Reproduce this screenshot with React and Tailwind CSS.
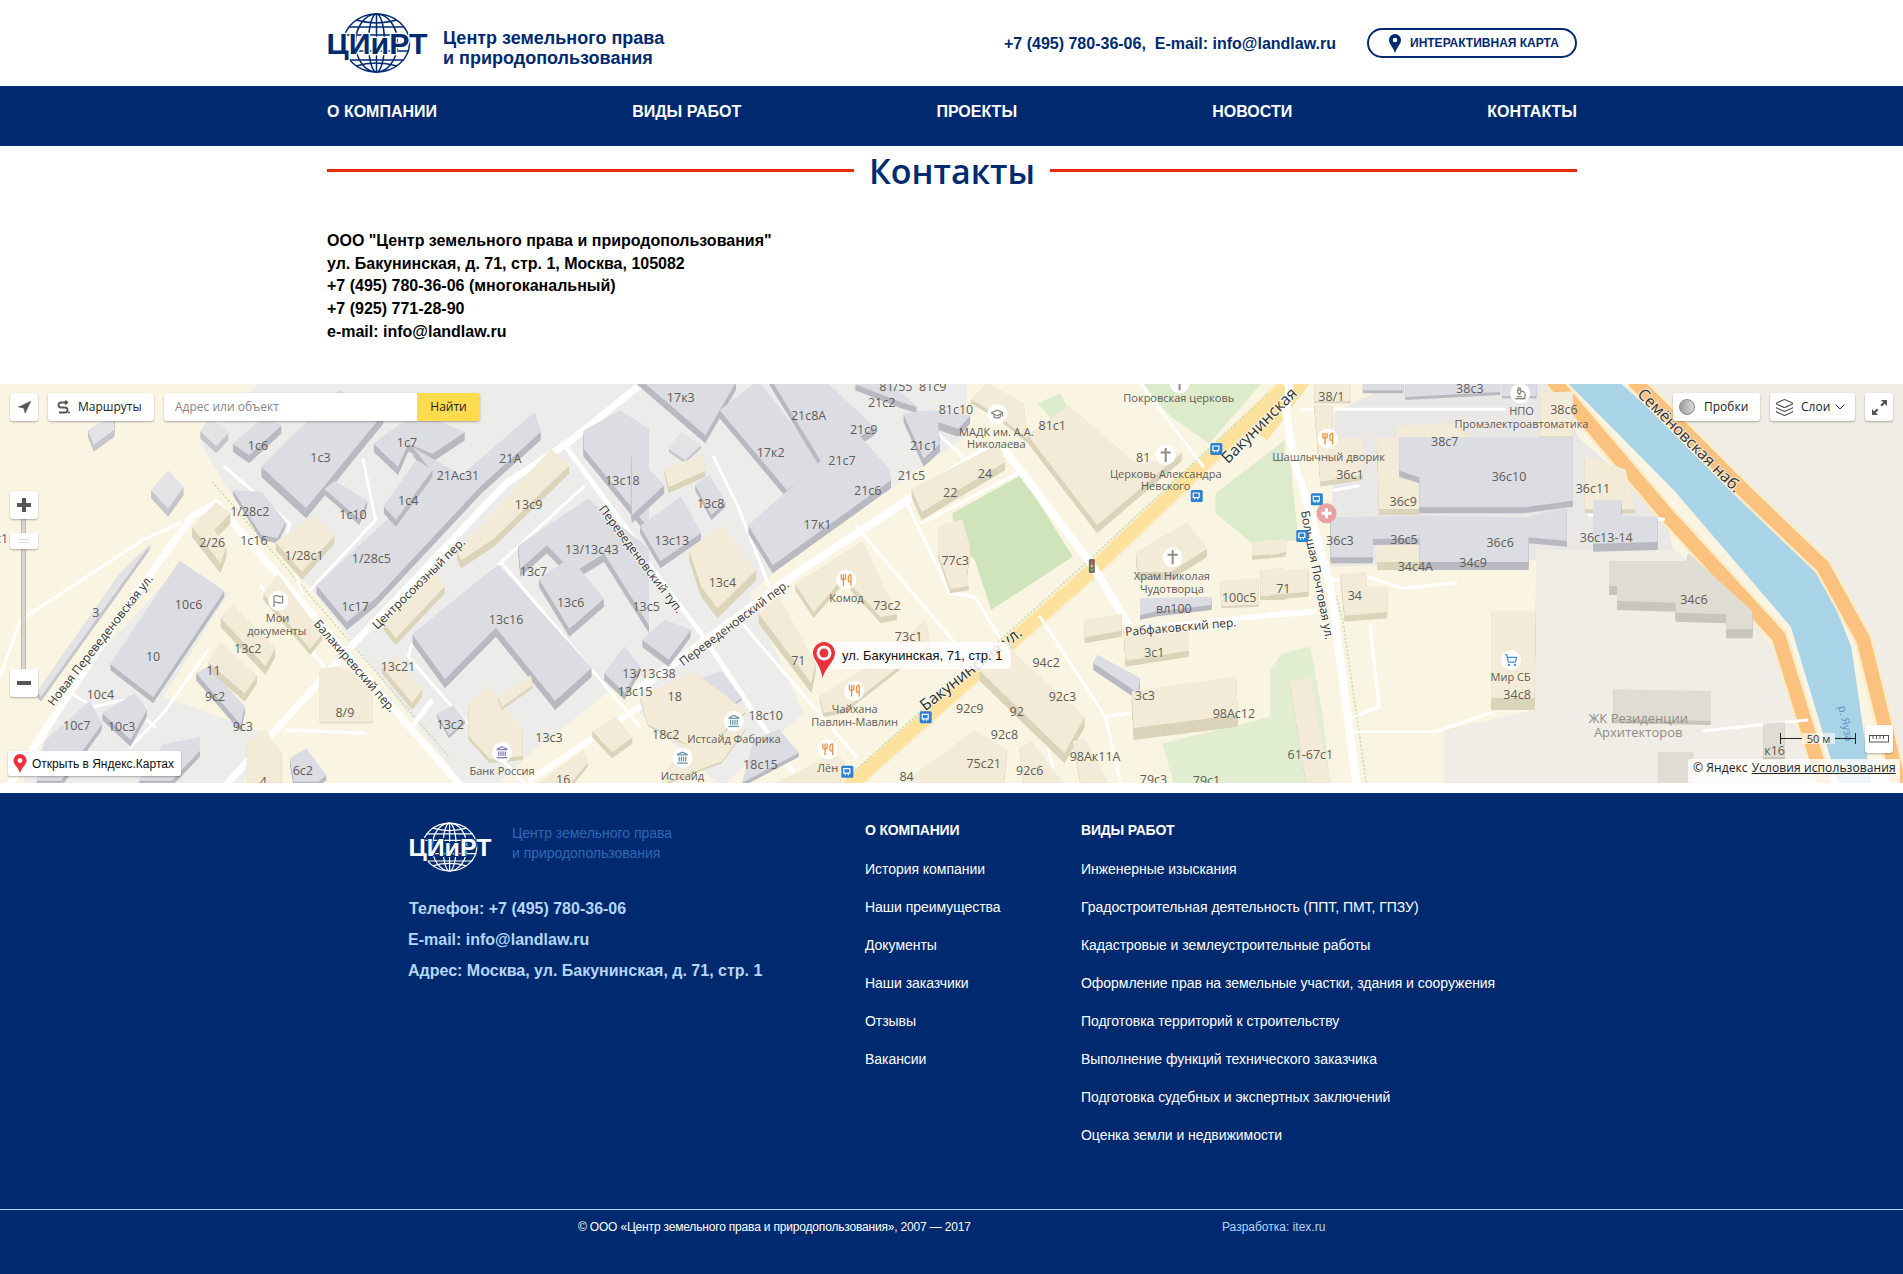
import {
  Navigation,
  Layers,
  ChevronDown,
  Utensils,
  Flag,
  Landmark,
  ShoppingCart,
  Microscope,
  GraduationCap,
} from "lucide-react";

// ─────────────────────────────────────────────
// Logo
// ─────────────────────────────────────────────
function Logo({ color, halo, className }) {
  return (
    <svg viewBox="0 0 102 60" className={className} fill="none">
      <g stroke={color} strokeWidth="1.5">
        <ellipse cx="50.5" cy="30" rx="33" ry="29" />
        <ellipse cx="50.5" cy="30" rx="21" ry="29" />
        <ellipse cx="50.5" cy="30" rx="8" ry="29" />
        <path d="M50.5 1v58M23 14h55M19 22h63M18 38h65M23 47h55" />
        <path d="M30 7q20 6 41 0M30 53q20-6 41 0" />
      </g>
      <text
        x="0.5"
        y="41"
        textLength="101"
        lengthAdjust="spacingAndGlyphs"
        fontSize="29"
        fontWeight="700"
        fill={color}
        stroke={halo}
        strokeWidth="2.5"
        paintOrder="stroke"
        className="font-['Liberation_Sans',sans-serif]"
      >
        ЦИиРТ
      </text>
    </svg>
  );
}

// ─────────────────────────────────────────────
// Map data, coordinates as read off three crops
// ─────────────────────────────────────────────
const PANELS = { a: [0, 2.45], b: [640, 2.45], c: [1270, 2.477] };
const mx = (p, x) => PANELS[p][0] + x / PANELS[p][1];
const my = (y) => y / 3 - 4;
const toPoints = (p, arr, dy = 0) => {
  const out = [];
  for (let i = 0; i < arr.length; i += 2) {
    out.push(`${mx(p, arr[i]).toFixed(1)},${(my(arr[i + 1]) + dy).toFixed(1)}`);
  }
  return out.join(" ");
};

const ZONES = [
  ["a", "#ececeb", [640, 0, 1568, 0, 1568, 860, 1300, 1120, 1210, 1220, 1140, 1220, 720, 560, 560, 330, 490, 190]],
  ["a", "#ececeb", [440, 560, 560, 640, 400, 950, 650, 1060, 590, 1220, 50, 1220, 200, 880]],
  ["b", "#ececeb", [0, 0, 800, 0, 800, 170, 400, 500, 270, 640, 400, 1000, 200, 1220, 0, 1000]],
  ["c", "#e9e8e6", [160, 95, 330, 0, 680, 0, 770, 180, 980, 400, 1000, 520, 660, 520, 660, 540, 150, 560]],
  ["c", "#efede6", [660, 510, 1000, 510, 1150, 640, 1300, 900, 1370, 1220, 430, 1220, 430, 1050, 650, 990]],
  ["c", "#efede6", [900, 0, 1600, 0, 1600, 1220, 1560, 1220, 1470, 780, 1370, 560, 1180, 340]],
];

const PARKS = [
  ["b", "#cfe4bb", [765, 400, 935, 285, 1060, 530, 860, 690, 820, 540, 770, 470]],
  ["b", "#dcebcb", [1225, 0, 1530, 0, 1395, 190, 1300, 110]],
  ["b", "#dcebcb", [1410, 340, 1580, 180, 1580, 470, 1500, 490, 1410, 400]],
  ["b", "#e2eed2", [1280, 1090, 1580, 1000, 1580, 1220, 1310, 1220]],
  ["b", "#dcebcb", [975, 70, 1030, 40, 1060, 110, 1010, 120]],
  ["c", "#dcebcb", [0, 240, 50, 240, 70, 480, 0, 490]],
  ["c", "#e2eed2", [30, 820, 100, 800, 130, 1000, 150, 1220, 0, 1220, 0, 870]],
];

// white streets: [panel, width, points]
const ROADS = [
  ["a", 7, [530, 370, 720, 640, 1130, 1220]],
  ["a", 7, [20, 1220, 300, 700, 470, 410, 530, 370]],
  ["a", 7, [550, 1220, 860, 800, 1240, 310, 1390, 190, 1568, 15]],
  ["a", 5, [1380, 190, 1568, 500]],
  ["b", 5, [0, 520, 150, 760, 400, 1220]],
  ["a", 3, [0, 890, 50, 720, 350, 480, 440, 430]],
  ["a", 3, [550, 260, 710, 430, 700, 480, 740, 640]],
  ["a", 3, [890, 240, 920, 420, 760, 630]],
  ["a", 3, [1430, 320, 1010, 790, 1000, 830, 1100, 970, 1300, 1230]],
  ["a", 3, [1230, 550, 1568, 1040]],
  ["a", 3, [160, 930, 230, 980, 300, 960, 380, 1040]],
  ["a", 3, [700, 1050, 895, 1060]],
  ["a", 3, [510, 810, 400, 1000, 320, 1100]],
  ["a", 3, [640, 620, 800, 870]],
  ["a", 5, [1010, 1040, 1055, 965]],
  ["a", 6, [1300, 1200, 1568, 980]],
  ["b", 8, [0, 925, 400, 565, 850, 205, 900, 220, 1110, 560, 1200, 740]],
  ["b", 3, [530, 440, 780, 800, 1000, 1100, 1020, 1220]],
  ["b", 3, [650, 360, 760, 640, 820, 650, 880, 770]],
  ["b", 3, [940, 270, 690, 430]],
  ["b", 3, [250, 730, 530, 1130]],
  ["b", 3, [980, 710, 1140, 1010, 1180, 1220]],
  ["b", 3, [1140, 1010, 1360, 970]],
  ["b", 3, [180, 230, 240, 380, 320, 630]],
  ["b", 3, [720, 150, 790, 230]],
  ["b", 5, [1190, 750, 1590, 700]],
  ["b", 3, [1220, 0, 1380, 260]],
  ["c", 8, [50, 0, 40, 100, 60, 240, 100, 400, 150, 620, 215, 1220]],
  ["c", 3, [80, 88, 580, 88]],
  ["c", 3, [160, 330, 218, 318]],
  ["c", 3, [140, 605, 230, 585, 330, 625, 460, 608]],
  ["c", 3, [248, 735, 270, 980, 200, 1015]],
  ["c", 3, [205, 1055, 410, 1055, 550, 998]],
  ["c", 6, [0, 705, 110, 695]],
  ["c", 3, [790, 405, 975, 418]],
  ["c", 3, [1075, 1052, 1330, 1020]],
];

// [panel, kind, points, height]
const BUILDINGS = [
  ["a", "g", [570, 215, 650, 130, 690, 160, 610, 250], 8],
  ["a", "l", [490, 175, 515, 130, 560, 180, 530, 220], 7],
  ["a", "l", [215, 170, 280, 125, 280, 170, 230, 215], 7],
  ["a", "l", [370, 355, 412, 295, 450, 345, 412, 410], 8],
  ["a", "g", [640, 290, 830, 60, 940, 130, 750, 415], 10],
  ["a", "g", [915, 215, 1020, 120, 1140, 180, 1060, 245, 1000, 215, 975, 285], 8],
  ["a", "g", [795, 345, 820, 320, 900, 380, 880, 435], 6],
  ["a", "g", [1010, 225, 1060, 260, 1130, 310, 1310, 120, 1325, 180, 1180, 340, 920, 680, 850, 750, 775, 640, 950, 440, 1060, 300], 8],
  ["a", "g", [940, 400, 1020, 260, 1060, 290, 970, 440], 7],
  ["a", "g", [570, 345, 640, 350, 700, 440, 680, 490, 640, 480], 5],
  ["a", "g", [1430, 175, 1520, 115, 1590, 170, 1590, 470, 1430, 230], 8],
  ["a", "g", [1270, 520, 1440, 380, 1590, 530, 1590, 760, 1480, 545, 1420, 590, 1480, 680, 1395, 770, 1320, 620, 1380, 570, 1340, 520, 1275, 590], 8],
  ["a", "g", [1010, 790, 1130, 670, 1220, 580, 1450, 890, 1360, 990, 1215, 770, 1090, 925], 9],
  ["a", "g", [270, 870, 440, 560, 550, 650, 375, 970], 6],
  ["a", "l", [90, 950, 290, 600, 370, 505, 100, 965], 5],
  ["a", "g", [480, 900, 510, 880, 600, 1000, 590, 1055], 7],
  ["a", "g", [250, 1020, 330, 960, 360, 1010, 320, 1100], 7],
  ["a", "g", [110, 1100, 220, 980, 250, 1050, 150, 1220, 90, 1220], 6],
  ["a", "g", [400, 1110, 490, 1090, 490, 1130, 420, 1220, 340, 1220], 6],
  ["a", "g", [710, 1150, 750, 1120, 800, 1200, 780, 1220, 720, 1220], 5],
  ["a", "g", [1070, 1010, 1110, 985, 1140, 1030, 1100, 1075], 3],
  ["a", "g", [1480, 900, 1530, 820, 1568, 880, 1530, 960], 7],
  ["a", "c", [470, 470, 530, 395, 565, 430, 525, 480, 555, 530, 540, 580], 10],
  ["a", "c", [675, 510, 770, 430, 820, 490, 740, 600], 8],
  ["a", "c", [1120, 540, 1350, 230, 1395, 280, 1210, 500, 1130, 565], 8],
  ["a", "c", [940, 750, 1060, 590, 1090, 640, 970, 795], 7],
  ["a", "c", [540, 740, 570, 700, 675, 830, 650, 885], 9],
  ["a", "c", [510, 870, 540, 810, 630, 910, 600, 965], 8],
  ["a", "c", [645, 660, 680, 600, 790, 780, 760, 825], 6],
  ["a", "c", [935, 880, 970, 850, 1035, 950, 1010, 990], 7],
  ["a", "c", [1148, 980, 1200, 930, 1280, 1060, 1280, 1140, 1200, 1150, 1148, 1080], 4],
  ["a", "c", [1220, 960, 1300, 895, 1305, 925, 1230, 990], 3],
  ["a", "c", [1320, 1220, 1430, 1120, 1440, 1160, 1400, 1220], 4],
  ["a", "c", [605, 1100, 650, 1060, 690, 1130, 690, 1220, 605, 1220], 4],
  ["a", "c", [1450, 1070, 1510, 1030, 1550, 1090, 1500, 1135], 6],
  ["a", "c", [783, 870, 825, 862, 913, 905, 913, 1030, 783, 1030], 1],
  ["b", "g", [-20, 0, 235, 0, 235, 30, 160, 190], 8],
  ["b", "g", [195, 115, 290, 25, 445, 270, 360, 355], 8],
  ["b", "g", [310, 0, 430, 0, 575, 165, 445, 270], 8],
  ["b", "g", [525, 30, 600, 15, 680, 100, 640, 85], 6],
  ["b", "g", [645, 125, 710, 115, 810, 130, 780, 170, 730, 150, 735, 215, 695, 260], 8],
  ["b", "g", [265, 460, 440, 270, 530, 180, 610, 290, 615, 325, 325, 580], 8],
  ["b", "g", [0, 460, 100, 370, 150, 480, 50, 565], 7],
  ["b", "g", [135, 330, 170, 300, 210, 380, 175, 420], 5],
  ["b", "g", [-20, 240, 60, 340, -20, 430], 8],
  ["b", "g", [5, 800, 60, 740, 125, 770, 70, 860], 7],
  ["b", "l", [70, 215, 100, 165, 150, 205, 110, 250], 3],
  ["b", "g", [150, 900, 200, 880, 250, 960, 190, 1010], 2],
  ["b", "g", [280, 1090, 340, 1060, 390, 1130, 250, 1220], 4],
  ["b", "c", [60, 285, 155, 240, 160, 290, 70, 340], 6],
  ["b", "c", [120, 540, 200, 465, 285, 600, 190, 715, 150, 650], 10],
  ["b", "c", [380, 630, 545, 500, 630, 720, 590, 730, 500, 610, 425, 715], 6],
  ["b", "c", [290, 730, 340, 680, 430, 880, 420, 940], 10],
  ["b", "c", [440, 960, 620, 820, 700, 730, 710, 800, 500, 1000, 450, 1010], 4],
  ["b", "c", [665, 350, 880, 215, 895, 270, 690, 420], 8],
  ["b", "c", [730, 450, 790, 430, 810, 520, 800, 600, 805, 630, 760, 640, 730, 530], 4],
  ["b", "c", [950, 190, 1050, 100, 1220, 280, 1330, 240, 1120, 460], 8],
  ["b", "c", [810, 70, 850, 20, 940, 80, 950, 190, 880, 120], 4],
  ["b", "c", [1215, 540, 1340, 450, 1390, 530, 1300, 600, 1220, 600], 8],
  ["b", "c", [1420, 610, 1515, 600, 1515, 680, 1425, 685], 2],
  ["b", "c", [1500, 500, 1580, 490, 1580, 530, 1500, 540], 4],
  ["b", "c", [1520, 580, 1580, 575, 1580, 660, 1520, 660], 4],
  ["b", "g", [1225, 670, 1400, 665, 1400, 690, 1260, 710, 1225, 720], 5],
  ["b", "c", [1090, 735, 1180, 720, 1180, 770, 1090, 790], 6],
  ["b", "c", [1185, 760, 1345, 750, 1345, 830, 1190, 860], 6],
  ["b", "g", [1110, 870, 1120, 845, 1225, 915, 1220, 960], 7],
  ["b", "c", [1205, 970, 1460, 925, 1465, 1040, 1210, 1080], 12],
  ["b", "c", [830, 900, 900, 830, 1090, 1040, 1040, 1150], 10],
  ["b", "c", [640, 1220, 820, 1060, 900, 1120, 890, 1220], 3],
  ["b", "c", [0, 960, 130, 880, 260, 1000, 150, 1120, 20, 1040], 2],
  ["b", "c", [100, 1100, 260, 1050, 200, 1150, 50, 1220], 2],
  ["b", "c", [330, 1220, 470, 1130, 500, 1150, 490, 1220], 3],
  ["b", "c", [930, 1110, 960, 1090, 1040, 1220, 940, 1220], 2],
  ["b", "c", [1060, 1090, 1090, 1080, 1150, 1220, 1080, 1220], 2],
  ["c", "c", [110, 0, 200, 0, 200, 70, 110, 70], 2],
  ["c", "c", [110, 90, 155, 90, 155, 190, 230, 190, 230, 300, 125, 320], 5],
  ["c", "c", [310, 150, 490, 140, 490, 185, 310, 190], 4],
  ["c", "c", [670, 45, 750, 40, 750, 175, 670, 175], 2],
  ["c", "c", [780, 240, 880, 280, 905, 400, 780, 400], 4],
  ["c", "c", [265, 190, 320, 190, 320, 295, 370, 310, 370, 405, 270, 405], 6],
  ["c", "c", [265, 500, 370, 500, 370, 570, 265, 570], 8],
  ["c", "c", [0, 590, 95, 580, 95, 650, 0, 660], 5],
  ["c", "c", [175, 600, 240, 595, 240, 640, 290, 640, 290, 715, 185, 725], 6],
  ["c", "c", [0, 490, 40, 490, 40, 525, 0, 535], 3],
  ["c", "c", [548, 730, 658, 730, 655, 990, 548, 990], 12],
  ["c", "c", [48, 910, 100, 900, 150, 1220, 90, 1220], 2],
  ["c", "g", [230, 0, 330, 0, 330, 40, 230, 40], 3],
  ["c", "g", [335, 0, 570, 0, 570, 45, 335, 60], 3],
  ["c", "g", [575, 0, 660, 0, 660, 55, 575, 55], 2],
  ["c", "g", [320, 190, 750, 190, 750, 380, 630, 400, 370, 400, 370, 310, 320, 290], 6],
  ["c", "g", [150, 430, 370, 425, 640, 430, 735, 400, 735, 500, 640, 490, 255, 495, 255, 550, 150, 550], 6],
  ["c", "g", [370, 480, 640, 495, 640, 570, 370, 570], 8],
  ["c", "g", [800, 385, 870, 385, 870, 430, 960, 435, 960, 510, 800, 515], 8],
  ["c", "t", [840, 570, 1035, 570, 1035, 545, 1195, 720, 1195, 775, 1130, 775, 1130, 730, 1005, 725, 1005, 695, 860, 690, 860, 645, 840, 645], 9],
  ["c", "t", [850, 940, 1092, 945, 1092, 1035, 850, 1030], 4],
  ["c", "t", [1222, 1040, 1275, 1035, 1275, 1140, 1222, 1140], 3],
  ["c", "t", [962, 1122, 1048, 1122, 1048, 1220, 962, 1220], 2],
];

const KIND = {
  g: ["#dcdce3", "#b9b9c1"],
  l: ["#e3e3e6", "#c6c6ca"],
  c: ["#f3ebd7", "#dbd3ba"],
  t: ["#dfdcd3", "#c8c5bb"],
};

// [panel, x, y, text]
const LABELS = [
  ["a", 632, 195, "1с6"], ["a", 785, 232, "1с3"], ["a", 997, 188, "1с7"], ["a", 1250, 235, "21А"],
  ["a", 1122, 285, "21Ас31"], ["a", 1525, 300, "13с18"], ["a", 1000, 360, "1с4"], ["a", 1295, 372, "13с9"],
  ["a", 612, 393, "1/28с2"], ["a", 865, 403, "1с10"], ["a", 520, 487, "2/26"], ["a", 622, 480, "1с16"],
  ["a", 745, 525, "1/28с1"], ["a", 910, 535, "1/28с5"], ["a", 1450, 507, "13/13с43"], ["a", 1307, 573, "13с7"],
  ["a", 462, 672, "10с6"], ["a", 1398, 668, "13с6"], ["a", 235, 698, "3"], ["a", 870, 678, "1с17"],
  ["a", 1240, 717, "13с16"], ["a", 375, 828, "10"], ["a", 607, 805, "13с2"], ["a", 975, 858, "13с21"],
  ["a", 523, 870, "11"], ["a", 246, 942, "10с4"], ["a", 527, 950, "9с2"], ["a", 845, 998, "8/9"],
  ["a", 188, 1035, "10с7"], ["a", 298, 1038, "10с3"], ["a", 595, 1038, "9с3"], ["a", 1103, 1032, "13с2"],
  ["a", 1345, 1073, "13с3"], ["a", 742, 1172, "6с2"], ["a", 1380, 1198, "16"], ["a", 645, 1205, "4"],
  ["a", 680, 712, "Мои"], ["a", 678, 752, "документы"], ["a", 1230, 1170, "Банк Россия"], ["a", 1590, 880, "13/13с38"],
  ["a", 1556, 935, "13с15"], ["a", -5, 475, "1с1"], ["b", 15, 680, "13с5"],
  ["b", 627, 18, "81/55"], ["b", 717, 18, "81с9"], ["b", 100, 52, "17к3"], ["b", 592, 67, "21с2"],
  ["b", 413, 105, "21с8А"], ["b", 774, 88, "81с10"], ["b", 1010, 135, "81с1"], ["b", 548, 148, "21с9"],
  ["b", 873, 153, "МАДК им. А.А."], ["b", 873, 190, "Николаева"], ["b", 695, 195, "21с1"], ["b", 320, 217, "17к2"],
  ["b", 495, 240, "21с7"], ["b", 845, 280, "24"], ["b", 665, 285, "21с5"], ["b", 558, 330, "21с6"],
  ["b", 760, 338, "22"], ["b", 173, 370, "13с8"], ["b", 435, 432, "17к1"], ["b", 78, 480, "13с13"],
  ["b", 772, 540, "77с3"], ["b", 202, 608, "13с4"], ["b", 506, 652, "Комод"], ["b", 605, 675, "73с2"],
  ["b", 658, 770, "73с1"], ["b", 388, 840, "71"], ["b", 995, 846, "94с2"], ["b", 85, 948, "18"],
  ["b", 526, 985, "Чайхана"], ["b", 526, 1023, "Павлин-Мавлин"], ["b", 1035, 950, "92с3"], ["b", 808, 985, "92с9"],
  ["b", 923, 993, "92"], ["b", 308, 1005, "18с10"], ["b", 230, 1075, "Истсайд Фабрика"], ["b", 63, 1063, "18с2"],
  ["b", 893, 1062, "92с8"], ["b", 295, 1152, "18с15"], ["b", 842, 1150, "75с21"], ["b", 460, 1162, "Лён"],
  ["b", 653, 1188, "84"], ["b", 104, 1187, "Истсайд"], ["b", 955, 1172, "92с6"], ["b", 1115, 1128, "98Ак11А"],
  ["b", 1258, 1198, "79с3"], ["b", 1388, 1200, "79с1"], ["b", 1455, 1000, "98Ас12"], ["b", 1237, 945, "3с3"],
  ["b", 1260, 817, "3с1"], ["b", 1308, 685, "вл100"], ["b", 1468, 652, "100с5"], ["b", 1303, 587, "Храм Николая"],
  ["b", 1303, 625, "Чудотворца"], ["b", 1320, 52, "Покровская церковь"], ["b", 1233, 232, "81"],
  ["b", 1288, 280, "Церковь Александра"], ["b", 1288, 317, "Невского"],
  ["c", 145, 228, "Шашлычный дворик"], ["c", 152, 48, "38/1"], ["c", 495, 25, "38с3"], ["c", 623, 92, "НПО"],
  ["c", 728, 88, "38с6"], ["c", 623, 130, "Промэлектроавтоматика"], ["c", 433, 185, "38с7"], ["c", 198, 283, "36с1"],
  ["c", 592, 288, "36с10"], ["c", 800, 325, "36с11"], ["c", 330, 363, "36с9"], ["c", 833, 472, "36с13-14"],
  ["c", 173, 480, "36с3"], ["c", 332, 477, "36с5"], ["c", 570, 486, "36с6"], ["c", 503, 546, "34с9"],
  ["c", 360, 558, "34с4А"], ["c", 33, 625, "71"], ["c", 210, 645, "34"], ["c", 1050, 657, "34с6"],
  ["c", 596, 890, "Мир СБ"], ["c", 612, 942, "34с8"], ["c", 100, 1122, "61-67с1"], ["c", 1250, 1110, "к16"],
];

// [panel, x, y, text, angle, size]
const STREETS = [
  ["a", 245, 780, "Новая Переведеновская ул.", -52, 12],
  ["a", 870, 857, "Балакиревский пер.", 49, 12],
  ["a", 1025, 610, "Центросоюзный пер.", -44.5, 12],
  ["a", 1571, 537, "Переведеновский туп.", 53, 12],
  ["b", 230, 728, "Переведеновский пер.", -37, 12],
  ["b", 810, 865, "Бакунинская ул.", -38, 16],
  ["b", 1516, 135, "Бакунинская", -45, 16],
  ["b", 1325, 740, "Рабфаковский пер.", -5, 12],
  ["c", 118, 585, "Большая Почтовая ул.", 79, 12],
  ["c", 1040, 180, "Семёновская наб.", 45, 16],
];

const BUS = [["b", 1412, 207], ["b", 1364, 348], ["b", 700, 1012], ["b", 508, 1175], ["c", 116, 358], ["c", 80, 468]];

const POIS = [
  ["b", 505, 600, Utensils, "#f0913c"],
  ["b", 525, 932, Utensils, "#f0913c"],
  ["b", 460, 1108, Utensils, "#f0913c"],
  ["c", 143, 176, Utensils, "#f0913c"],
  ["a", 682, 663, Flag, "#8a8a84"],
  ["a", 1230, 1117, Landmark, "#7f7fc8"],
  ["b", 230, 1023, Landmark, "#6f97ad"],
  ["b", 104, 1133, Landmark, "#6f97ad"],
  ["b", 875, 102, GraduationCap, "#8a8a84"],
  ["c", 620, 40, Microscope, "#8a8a84"],
  ["c", 597, 840, ShoppingCart, "#4a90d9"],
];

const CHURCHES = [["b", 1288, 225], ["b", 1305, 532], ["b", 1322, 10]];

function MapDrawing() {
  return (
    <svg viewBox="0 0 1903 399" className="block w-full h-[399px]">
      <rect width="1903" height="399" fill="#faf4e2" />
      {ZONES.map(([p, fill, arr], i) => (
        <polygon key={i} points={toPoints(p, arr)} fill={fill} />
      ))}
      {PARKS.map(([p, fill, arr], i) => (
        <polygon key={i} points={toPoints(p, arr)} fill={fill} />
      ))}

      {/* river and embankments */}
      <polygon
        points={toPoints("c", [730, 0, 860, 0, 1170, 340, 1360, 560, 1440, 800, 1490, 1220, 1410, 1220, 1290, 740, 1000, 330])}
        fill="#a9d3e7"
      />
      <polyline points={toPoints("c", [700, 0, 980, 400, 1260, 770, 1375, 1220])} fill="none" stroke="#f9ecc6" strokeWidth="19" />
      <polyline points={toPoints("c", [700, 0, 980, 400, 1260, 770, 1375, 1220])} fill="none" stroke="#fbc27f" strokeWidth="14" />
      <polyline points={toPoints("c", [900, 0, 1180, 340, 1370, 560, 1470, 780, 1560, 1220])} fill="none" stroke="#f9ecc6" strokeWidth="19" />
      <polyline points={toPoints("c", [900, 0, 1180, 340, 1370, 560, 1470, 780, 1560, 1220])} fill="none" stroke="#fbc27f" strokeWidth="14" />

      {/* main street */}
      <polyline points={toPoints("b", [510, 1220, 1100, 580, 1580, 20])} fill="none" stroke="#f9ecc6" strokeWidth="17" />
      <polyline points={toPoints("b", [510, 1220, 1100, 580, 1580, 20])} fill="none" stroke="#fde29d" strokeWidth="13" />
      <polyline points={toPoints("c", [-20, 170, 85, 0])} fill="none" stroke="#fde29d" strokeWidth="13" />

      {/* footpaths */}
      <polyline points={toPoints("a", [520, 305, 720, 590, 1100, 1130])} fill="none" stroke="#c9dcae" strokeWidth="1.5" strokeDasharray="2 2" />
      <polyline points={toPoints("b", [520, 1180, 1100, 540, 1540, 40])} fill="none" stroke="#c9dcae" strokeWidth="1.5" strokeDasharray="2 2" />
      <polyline points={toPoints("c", [70, 240, 180, 720, 240, 1220])} fill="none" stroke="#c9dcae" strokeWidth="1.5" strokeDasharray="2 2" />

      {ROADS.map(([p, w, arr], i) => (
        <polyline key={i} points={toPoints(p, arr)} fill="none" stroke="#ffffff" strokeWidth={w} strokeLinejoin="round" strokeLinecap="round" />
      ))}

      {BUILDINGS.map(([p, kind, arr, h], i) => (
        <g key={i}>
          {Array.from({ length: h }, (_, k) => (
            <polygon key={k} points={toPoints(p, arr, -k)} fill={KIND[kind][1]} />
          ))}
          <polygon points={toPoints(p, arr, -h)} fill={KIND[kind][0]} />
        </g>
      ))}

      <g className="font-['Open_Sans',sans-serif]" fontSize="11" fill="#5f5d56" textAnchor="middle" dominantBaseline="central">
        {LABELS.map(([p, x, y, t], i) => (
          // house numbers run a little larger than place names
          <text key={i} x={mx(p, x)} y={my(y)} fontSize={/\d/.test(t) ? 12.5 : 11}>
            {t}
          </text>
        ))}
        <text x={mx("c", 912)} y={my(1015)} fontSize="13" fill="#8f8e88">ЖК Резиденции</text>
        <text x={mx("c", 912)} y={my(1055)} fontSize="13" fill="#8f8e88">Архитекторов</text>
        <text transform={`translate(${mx("c", 1428)} ${my(1030)}) rotate(78)`} fill="#5d8fc4">р. Яуза</text>
        {STREETS.map(([p, x, y, t, a, size], i) => (
          <text
            key={i}
            transform={`translate(${mx(p, x).toFixed(1)} ${my(y).toFixed(1)}) rotate(${a})`}
            fontSize={size}
            fill="#33322e"
            stroke="#ffffff"
            strokeWidth="2"
            strokeOpacity="0.7"
            paintOrder="stroke"
          >
            {t}
          </text>
        ))}
      </g>

      {BUS.map(([p, x, y], i) => (
        <g key={i} transform={`translate(${mx(p, x)} ${my(y)})`}>
          <rect x="-6" y="-6" width="12" height="12" rx="1.5" fill="#2f80d0" />
          <path d="M-3.5 -3h6v4.5h-6zM1 1.5v2M-2 1.5v2" fill="none" stroke="#ffffff" strokeWidth="1.2" />
        </g>
      ))}

      {POIS.map(([p, x, y, Icon, color], i) => (
        <g key={i}>
          <circle cx={mx(p, x)} cy={my(y)} r="10" fill="#ffffff" />
          <Icon x={mx(p, x) - 6.5} y={my(y) - 6.5} size={13} color={color} strokeWidth={2.4} />
        </g>
      ))}

      {CHURCHES.map(([p, x, y], i) => (
        <g key={i} transform={`translate(${mx(p, x)} ${my(y)})`}>
          <circle r="10" fill="#ffffff" />
          <path d="M0 -7V7M-5 -2.5H5" stroke="#8f8d84" strokeWidth="2" />
        </g>
      ))}

      {/* hospital */}
      <g transform={`translate(${mx("c", 140)} ${my(400)})`}>
        <circle r="10" fill="#e6a3a3" />
        <path d="M0 -5V5M-5 0H5" stroke="#ffffff" strokeWidth="3" />
      </g>

      {/* traffic light */}
      <g transform={`translate(${mx("b", 1107)} ${my(558)})`}>
        <rect x="-3" y="-7" width="6" height="14" rx="1.5" fill="#6e6e66" />
        <circle cy="-3.8" r="1.4" fill="#d9534f" />
        <circle r="1.4" fill="#e7c14a" />
        <circle cy="3.8" r="1.4" fill="#7cb55c" />
      </g>
    </svg>
  );
}

// ─────────────────────────────────────────────
// Map overlay controls
// ─────────────────────────────────────────────
const CTRL = "absolute h-7 bg-white rounded-[3px] shadow-[0_1px_2px_rgba(0,0,0,0.3)] flex items-center";

function MapControls() {
  return (
    <>
      <div className={`${CTRL} left-[10px] top-[9px] w-7 justify-center`}>
        <Navigation size={15} className="text-[#555]" fill="#555" strokeWidth={1} />
      </div>
      <div className={`${CTRL} left-[48px] top-[9px] w-[106px] pl-[8px] gap-[7px] text-[12px] text-[#222] font-['Open_Sans',sans-serif]`}>
        <svg width="15" height="15" viewBox="0 0 15 15" fill="none" stroke="#555" strokeWidth="1.8">
          <path d="M11 2.500H5a2.500 2.500 0 0 0 0 5h4a2.500 2.500 0 0 1 0 5H3" />
          <path d="M9 .8 11.200 2.500 9 4.200" />
          <circle cx="13" cy="12.500" r="1" fill="#555" stroke="none" />
        </svg>
        Маршруты
      </div>
      <div className="absolute left-[164px] top-[9px] w-[316px] h-7 flex rounded-[3px] shadow-[0_1px_2px_rgba(0,0,0,0.3)] text-[12px] font-['Open_Sans',sans-serif]">
        <div className="w-[253px] bg-white pl-[11px] flex items-center text-[#888] rounded-l-[3px]">Адрес или объект</div>
        <div className="flex-1 bg-[#ffdb4d] flex items-center justify-center text-[#222] rounded-r-[3px]">Найти</div>
      </div>

      {/* zoom */}
      <div className="absolute left-[21px] top-[135px] w-[5px] h-[150px] bg-[#d8d6cc] border-x border-[#bdbbb0]" />
      <div className={`${CTRL} left-[10px] top-[107px] w-7 justify-center`}>
        <span className="w-[14px] h-1 bg-[#555] relative block">
          <span className="absolute left-[5px] -top-[5px] w-1 h-[14px] bg-[#555]" />
        </span>
      </div>
      <div className="absolute left-[10px] top-[149px] w-7 h-4 bg-white rounded-[3px] shadow-[0_1px_2px_rgba(0,0,0,0.3)] text-[8px] leading-4 text-center text-[#777]">
        ::::
      </div>
      <div className={`${CTRL} left-[10px] top-[285px] w-7 justify-center`}>
        <span className="w-[14px] h-1 bg-[#555] block" />
      </div>

      {/* open in yandex */}
      <div className="absolute left-[8px] top-[367px] w-[173px] h-[25px] bg-white rounded-[2px] shadow-[0_1px_2px_rgba(0,0,0,0.3)] flex items-center pl-[5px] gap-[5px] text-[12px] text-[#111] whitespace-nowrap font-['Liberation_Sans',sans-serif]">
        <svg width="14" height="19" viewBox="0 0 14 19">
          <path d="M7 0a6.600 6.600 0 0 0-6.600 6.600C.4 10.600 5 13 7 19c2-6 6.600-8.400 6.600-12.400A6.600 6.600 0 0 0 7 0z" fill="#f0313c" />
          <circle cx="7" cy="6.600" r="2.400" fill="#ffffff" />
        </svg>
        Открыть в Яндекс.Картах
      </div>

      {/* right side */}
      <div className={`${CTRL} left-[1673px] top-[9px] w-[87px] pl-[6px] gap-[9px] text-[12px] text-[#222] font-['Open_Sans',sans-serif]`}>
        <span className="w-4 h-4 rounded-full bg-gradient-to-r from-[#9a9a9a] to-[#dcdcdc] border border-[#888]" />
        Пробки
      </div>
      <div className={`${CTRL} left-[1770px] top-[9px] w-[85px] pl-[5px] text-[12px] text-[#222] font-['Open_Sans',sans-serif]`}>
        <Layers size={19} className="text-[#555]" strokeWidth={1.5} />
        <span className="ml-[7px]">Слои</span>
        <ChevronDown size={16} className="ml-[2px] text-[#333]" strokeWidth={1.5} />
      </div>
      <div className={`${CTRL} left-[1865px] top-[9px] w-7 justify-center`}>
        <svg width="15" height="15" viewBox="0 0 15 15" fill="#555">
          <path d="M9 0h6v6l-2.200-2.200-2.800 2.800-1.600-1.600 2.800-2.800zM6 15H0V9l2.200 2.200 2.800-2.800 1.600 1.600-2.800 2.800z" />
        </svg>
      </div>

      {/* scale and ruler */}
      <div className="absolute left-[1780px] top-[349px] w-[76px] h-[11px] flex items-center">
        <span className="w-px h-[11px] bg-[#222]" />
        <span className="w-[21px] h-px bg-[#222]" />
        <span className="flex-1 text-center text-[11px] leading-none text-[#333] bg-white/60 font-['Open_Sans',sans-serif]">50 м</span>
        <span className="w-[20px] h-px bg-[#222]" />
        <span className="w-px h-[11px] bg-[#222]" />
      </div>
      <div className={`${CTRL} left-[1865px] top-[341px] w-7 justify-center`}>
        <svg width="20" height="8" viewBox="0 0 20 8" fill="none" stroke="#555">
          <rect x=".5" y=".5" width="19" height="6.500" />
          <path d="M4 1v3M7.500 1v3M11 1v3M14.500 1v3" />
        </svg>
      </div>

      {/* copyright */}
      <div className="absolute left-[1688px] top-[375px] w-[212px] h-6 bg-white/80 rounded-l-[2px] flex items-center pl-[5px] pb-[7px] text-[12px] tracking-[0.1px] text-[#222] whitespace-nowrap font-['Open_Sans',sans-serif]">
        © Яндекс <span className="ml-1 underline">Условия использования</span>
      </div>

      {/* pin and address balloon */}
      <div className="absolute left-[832px] top-[258px] w-[179px] h-[27px] bg-white/85 rounded-[3px] flex items-center pl-[10px] text-[13px] text-[#111] whitespace-nowrap font-['Liberation_Sans',sans-serif]">
        ул. Бакунинская, 71, стр. 1
      </div>
      <svg className="absolute left-[813px] top-[258px]" width="30" height="38" viewBox="0 0 30 38">
        <path d="M13 34 L25 18 L16 30z" fill="#000" opacity="0.15" />
        <path d="M11 0C5 0 0 5 0 11c0 7 7 10 9.500 25C12 26 22 19 22 11 22 5 17 0 11 0z" fill="#e8323c" />
        <circle cx="11" cy="11" r="7.500" fill="#ffffff" />
        <circle cx="11" cy="11" r="4.500" fill="#e8323c" />
      </svg>
    </>
  );
}

// ─────────────────────────────────────────────
// Footer
// ─────────────────────────────────────────────
const COMPANY_LINKS = ["История компании", "Наши преимущества", "Документы", "Наши заказчики", "Отзывы", "Вакансии"];
const WORK_LINKS = [
  "Инженерные изыскания",
  "Градостроительная деятельность (ППТ, ПМТ, ГПЗУ)",
  "Кадастровые и землеустроительные работы",
  "Оформление прав на земельные участки, здания и сооружения",
  "Подготовка территорий к строительству",
  "Выполнение функций технического заказчика",
  "Подготовка судебных и экспертных заключений",
  "Оценка земли и недвижимости",
];

function FooterColumn({ title, links, className }) {
  return (
    <div className={className}>
      <div className="text-[14px] leading-[16px] font-bold uppercase text-white tracking-[-0.2px]">{title}</div>
      <ul className="mt-[12px] flex flex-col">
        {links.map((l) => (
          <li key={l} className="h-[38px] text-[14px] leading-[38px] tracking-[-0.04px] text-white whitespace-nowrap">
            {l}
          </li>
        ))}
      </ul>
    </div>
  );
}

export default function App() {
  return (
    <div className="min-h-[1274px] bg-white font-['Liberation_Sans',sans-serif]">
      <header className="w-[1250px] ml-[327px] h-[86px] flex items-center">
        <Logo color="#002a70" halo="#ffffff" className="w-[102px] h-[60px] shrink-0 -ml-px" />
        <div className="ml-[15px] mt-[10px] text-[18px] leading-[20px] font-bold text-[#002a70]">
          Центр земельного права
          <br />
          и природопользования
        </div>
        <div className="ml-auto mt-[2px] text-[16px] font-bold text-[#002a70] whitespace-pre">+7 (495) 780-36-06,  E-mail: info@landlaw.ru</div>
        <div className="ml-[31px] w-[210px] h-[30px] border-2 border-[#002a70] rounded-full flex items-center pl-[20px] gap-[9px] text-[12px] font-bold uppercase text-[#002a70] whitespace-nowrap">
          <svg width="12" height="19" viewBox="0 0 12 19">
            <path d="M6 0a6 6 0 0 0-6 6c0 4 4 7 6 13 2-6 6-9 6-13a6 6 0 0 0-6-6z" fill="#002a70" />
            <circle cx="6" cy="6" r="2.300" fill="#ffffff" />
          </svg>
          Интерактивная карта
        </div>
      </header>

      <nav className="h-[60px] bg-[#002a70]">
        <div className="w-[1250px] ml-[327px] flex justify-between pt-[17px] text-[16px] leading-[18px] font-bold uppercase text-white">
          <span>О компании</span>
          <span>Виды работ</span>
          <span>Проекты</span>
          <span>Новости</span>
          <span>Контакты</span>
        </div>
      </nav>

      <main className="w-[1250px] ml-[327px]">
        <div className="flex items-start h-[60px] pt-[23px]">
          <span className="flex-1 h-[3px] bg-[#e32b0c]" />
          <h1 className="-mt-[23px] mx-[15px] text-[34px] leading-[50px] font-semibold text-[#002a70] font-['Open_Sans',sans-serif]">Контакты</h1>
          <span className="flex-1 h-[3px] bg-[#e32b0c]" />
        </div>
        <div className="mt-[24px] h-[114px] text-[16px] leading-[22.7px] font-bold text-black">
          <p>ООО "Центр земельного права и природопользования"</p>
          <p>ул. Бакунинская, д. 71, стр. 1, Москва, 105082</p>
          <p>+7 (495) 780-36-06 (многоканальный)</p>
          <p>+7 (925) 771-28-90</p>
          <p>e-mail: info@landlaw.ru</p>
        </div>
      </main>

      <section className="relative mt-[40px] h-[399px] overflow-hidden">
        <MapDrawing />
        <MapControls />
      </section>

      <footer className="mt-[10px] h-[481px] bg-[#002a70]">
        <div className="h-[416px] flex pl-[408px] pt-[29px]">
          <div className="w-[457px]">
            <div className="flex items-center">
              <Logo color="#ffffff" halo="#002a70" className="w-[84px] h-[50px] shrink-0" />
              <div className="ml-[20px] -mt-[8px] text-[14px] leading-[20px] tracking-[-0.03px] text-[#2f68b0]">
                Центр земельного права
                <br />
                и природопользования
              </div>
            </div>
            <div className="mt-[26px] flex flex-col gap-[9px] text-[16px] leading-[22px] font-bold text-[#b7d5fb]">
              <span className="pl-px">Телефон: +7 (495) 780-36-06</span>
              <span>E-mail: info@landlaw.ru</span>
              <span>Адрес: Москва, ул. Бакунинская, д. 71, стр. 1</span>
            </div>
          </div>
          <FooterColumn title="О компании" links={COMPANY_LINKS} className="w-[216px]" />
          <FooterColumn title="Виды работ" links={WORK_LINKS} />
        </div>
        <div className="border-t border-[#b7d5fb] h-[65px] relative text-[12px]">
          <span className="absolute left-[578px] top-[8px] tracking-[-0.18px] text-white">© ООО «Центр земельного права и природопользования», 2007 — 2017</span>
          <span className="absolute left-[1222px] top-[8px] text-[#b7d5fb]">Разработка: itex.ru</span>
        </div>
      </footer>
    </div>
  );
}
